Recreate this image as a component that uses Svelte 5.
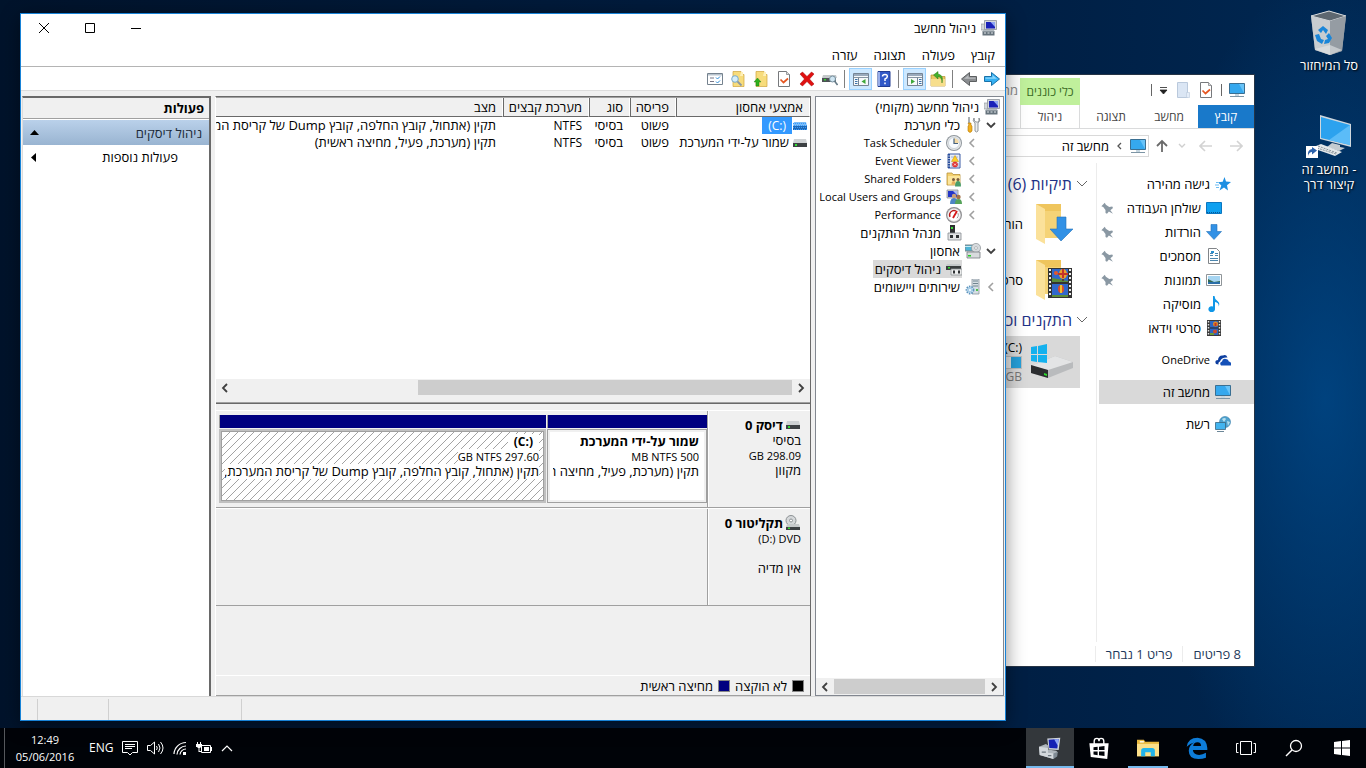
<script>
	/**
	 * Hebrew (RTL) desktop with the Computer Management console
	 * open in front of a file explorer window
	 */

	const menus = ['קובץ', 'פעולה', 'תצוגה', 'עזרה'];

	const tools = [
		{ icon: 'arrow-right', label: 'הקודם' },
		{ icon: 'arrow-left', label: 'הבא' },
		{ sep: true },
		{ icon: 'folder-out', label: 'רמה אחת למעלה' },
		{ icon: 'pane-tree', label: 'הצג עץ מסוף', active: true },
		{ sep: true },
		{ icon: 'help', label: 'עזרה' },
		{ icon: 'pane-actions', label: 'הצג חלונית פעולות', active: true },
		{ sep: true },
		{ icon: 'disk-find', label: 'סרוק דיסקים' },
		{ icon: 'delete', label: 'מחק' },
		{ icon: 'doc-check', label: 'מאפיינים' },
		{ icon: 'folder-up', label: 'פתח' },
		{ icon: 'folder-find', label: 'סייר' },
		{ icon: 'list', label: 'הגדרות' }
	];

	const tree = [
		{ level: 0, icon: 'manage', text: 'ניהול מחשב (מקומי)' },
		{ level: 1, icon: 'tools', text: 'כלי מערכת', arrow: 'open' },
		{ level: 2, icon: 'clock', text: 'Task Scheduler', arrow: 'closed', latin: true },
		{ level: 2, icon: 'event', text: 'Event Viewer', arrow: 'closed', latin: true },
		{ level: 2, icon: 'shared', text: 'Shared Folders', arrow: 'closed', latin: true },
		{ level: 2, icon: 'users', text: 'Local Users and Groups', arrow: 'closed', latin: true },
		{ level: 2, icon: 'gauge', text: 'Performance', arrow: 'closed', latin: true },
		{ level: 2, icon: 'device', text: 'מנהל ההתקנים' },
		{ level: 1, icon: 'storage', text: 'אחסון', arrow: 'open' },
		{ level: 2, icon: 'diskmgmt', text: 'ניהול דיסקים' },
		{ level: 1, icon: 'services', text: 'שירותים ויישומים', arrow: 'closed' }
	];
	let selectedNode = $state(9);

	const volumes = [
		{
			name: '(C:)',
			layout: 'פשוט',
			type: 'בסיסי',
			fs: 'NTFS',
			status: 'תקין (אתחול, קובץ החלפה, קובץ Dump של קריסת המערכת, מחיצה ראשית)'
		},
		{
			name: 'שמור על-ידי המערכת',
			layout: 'פשוט',
			type: 'בסיסי',
			fs: 'NTFS',
			status: 'תקין (מערכת, פעיל, מחיצה ראשית)'
		}
	];
	let selectedVolume = $state(0);

	const places = [
		{ icon: 'desktop', text: 'שולחן העבודה', pinned: true },
		{ icon: 'download', text: 'הורדות', pinned: true },
		{ icon: 'doc', text: 'מסמכים', pinned: true },
		{ icon: 'picture', text: 'תמונות', pinned: true },
		{ icon: 'music', text: 'מוסיקה' },
		{ icon: 'video', text: 'סרטי וידאו' }
	];

	const apps = [
		{ icon: 'edge', label: 'Edge' },
		{ icon: 'explorer', label: 'סייר הקבצים', running: true },
		{ icon: 'store', label: 'חנות' },
		{ icon: 'manage-large', label: 'ניהול מחשב', running: true, active: true }
	];
</script>

{#snippet icon(name, size = 16)}
	<svg class="icon" width={size} height={size} viewBox="0 0 16 16" aria-hidden="true">
		{#if name === 'manage'}
			<path d="M3.500.5h12v9h-12z" fill="#d5d8dc" stroke="#8c9299" stroke-width=".8" />
			<path d="M5 2h9v6.500H5z" fill="#1a22b8" />
			<path d="M9.500 2H14v5z" fill="#8fa6f3" />
			<path d="M0 4h3.500v6H0z" fill="#d2d6d9" stroke="#8c9299" stroke-width=".6" />
			<path d="M7 9.500h6v2H7z" fill="#9aa2aa" />
			<path d="M1.500 11h12v4.500h-12z" fill="#66737c" />
			<path d="M2 10h11l.5 1.500h-12z" fill="#b4bcc2" />
			<path d="M3 12.500h2v1H3zm3.500 0h2v1h-2zm3.500 0h2v1h-2z" fill="#dfe6ea" />
		{:else if name === 'manage-large'}
			<path d="m6 1 9.500-.5-1.200 9L7 9z" fill="#cfd4da" />
			<path d="m7 2 7.300-.6-1 7L7.500 8z" fill="#1420b4" />
			<path d="m11 1.700 3.300-.3-.6 5z" fill="#8da4f4" />
			<path d="m0 7 5-2 1.500 1v3l6 1 1 1-3 5L.5 13z" fill="#aeb5bb" />
			<path d="m0 7 6.500 1v3.500l4 .5v4L.5 13z" fill="#d3d8dc" />
			<path d="M2 11h3M6.500 13.500H9" stroke="#6d777f" />
			<path d="m10.500 12 3.200-1.200-.5 3.400-2.700 1.800z" fill="#7f8a93" />
		{:else if name === 'tools'}
			<path d="M4 0v6" stroke="#8d949a" stroke-width="1.500" />
			<path d="M3 6h3v2l1 1v5q-2 3-4 0V9l1-1z" fill="#f2b020" stroke="#b57808" stroke-width=".6" />
			<path d="M9 1q-2 3 1 5v8q1.500 2 3 0V6q3-2 1-5v3l-1.200 1H11L9.500 4z" fill="#eceef0" stroke="#777d83" stroke-width=".8" />
		{:else if name === 'clock'}
			<circle cx="8" cy="8" r="8" fill="#8f969c" />
			<circle cx="8" cy="8" r="7" fill="#e6e8ea" />
			<circle cx="8" cy="8" r="5.500" fill="#f8fbff" stroke="#b9c2ca" stroke-width=".6" />
			<path d="M8 8V3a5 5 0 0 1 4.800 5z" fill="#f3d9a5" />
			<path d="M8 3.500V8.500h4" fill="none" stroke="#45617f" stroke-width="1.200" />
		{:else if name === 'event'}
			<path d="M2 1h12v14H2z" fill="#e9eef7" stroke="#3d5da5" />
			<path d="M3 1v14" stroke="#274c9c" stroke-width="2" />
			<path d="M1 3h3M1 5.500h3M1 8h3M1 10.500h3M1 13h3" stroke="#aab8d4" />
			<path d="M5 4h7M5 11h8M5 13h8" stroke="#8ba6d0" stroke-width=".8" />
			<path d="m9 2.500 3.500 6h-7z" fill="#ffcf24" stroke="#c28d00" stroke-width=".5" />
			<circle cx="9" cy="11.500" r="2.800" fill="#df2f2f" />
			<path d="m8 10.500 2 2m0-2-2 2" stroke="#fff" stroke-width=".8" />
		{:else if name === 'shared'}
			<path d="M1 2h5l1 1.500h7V14H1z" fill="#f4d06e" stroke="#b8923a" stroke-width=".8" />
			<path d="M2 5h12v8.500H2z" fill="#fbe59c" />
			<circle cx="7.500" cy="8.500" r="1.500" fill="#7b5a3b" />
			<circle cx="12" cy="8.500" r="1.500" fill="#7b5a3b" />
			<path d="M5.500 13.500q0-3.500 2-3.500t2 3.500z" fill="#e8b060" />
			<path d="M9 15.500q0-5.500 3-5.500t3 5.500z" fill="#4a9e6b" />
		{:else if name === 'users'}
			<path d="M1 1h11v8H1z" fill="#cfd4da" stroke="#7c838b" stroke-width=".7" />
			<path d="M2 2h9v6H2z" fill="#2336c8" />
			<path d="M7 2h4v4z" fill="#a9b9f8" />
			<circle cx="8" cy="7" r="2.200" fill="#c9a078" />
			<circle cx="12.500" cy="8" r="2.200" fill="#a3714a" />
			<path d="M4 15q0-6 4-6t4 6z" fill="#4d84c4" />
			<path d="M9 15q0-5 3.500-5t3.500 5z" fill="#56a35a" />
		{:else if name === 'gauge'}
			<circle cx="8" cy="8" r="8" fill="#8f8f92" />
			<circle cx="8" cy="8" r="6.800" fill="#e3e3e4" />
			<circle cx="8" cy="8" r="5.800" fill="#fff" />
			<path d="M4 10a4.500 4.500 0 0 1 6-6" fill="none" stroke="#b81818" stroke-width="1.300" />
			<path d="m7 11 4-7" stroke="#d61818" stroke-width="1.800" />
			<path d="M12 6.500q1 3-1.500 5" fill="none" stroke="#444" stroke-dasharray="1 1" />
		{:else if name === 'device'}
			<path d="M4 0h5v9H4z" fill="#2d2f31" />
			<path d="M5 2h2v2H5z" fill="#3bdc3b" />
			<path d="M2 8h13v7H2z" fill="#e3e5e6" stroke="#878c90" stroke-width=".8" />
			<path d="M4 10h3v3H4zm6 0h3v3h-3z" fill="#2e3133" />
		{:else if name === 'storage'}
			<path d="M0 2h9v6H0z" fill="#4db4d6" stroke="#7e8589" />
			<path d="M0 3h9v1H0z" fill="#c8ebf5" />
			<circle cx="11" cy="5" r="4.600" fill="#d6dadd" stroke="#8d9296" stroke-width=".7" />
			<circle cx="11" cy="5" r="1.400" fill="#fff" stroke="#8d9296" stroke-width=".6" />
			<path d="M2 9h13v6H2z" fill="#d8dbdd" stroke="#777c80" stroke-width=".8" />
			<path d="M3 12h3v1.500H3z" fill="#24d024" />
		{:else if name === 'diskmgmt'}
			<path d="M1 3h13l1 2H0z" fill="#c5c8ca" />
			<path d="M0 5h15v4H0z" fill="#3a3d3f" />
			<path d="M2 6h2v1.500H2z" fill="#2fe02f" />
			<path d="M5 8h11v6H5z" fill="#eceded" stroke="#8a8f93" stroke-width=".8" />
			<path d="M7 9.500h2v3H7zm5 0h2v3h-2z" fill="#2e3133" />
		{:else if name === 'services'}
			<path d="M7 0h7v15H7z" fill="#d7dfe4" stroke="#8a969e" stroke-width=".8" />
			<path d="M8 2h5M8 4.500h5M8 7h5" stroke="#708590" />
			<path d="M11 10h2v2h-2z" fill="#4ec04e" />
			<circle cx="5" cy="11" r="3.500" fill="#cfe4f3" stroke="#5e95bd" stroke-width="1.800" stroke-dasharray="1.500 1" />
			<circle cx="5" cy="11" r="2.500" fill="#a8cde8" />
			<circle cx="5" cy="11" r="1" fill="#fff" />
		{:else if name === 'arrow-right' || name === 'arrow-left'}
			{#if name === 'arrow-right'}
				<path d="M.5 5.500h7v-4L15.500 8l-8 6.500v-4h-7z" fill="#35b0f2" stroke="#1971a8" />
				<path d="M1.500 6.500h7V4l4.500 3.800H1.500z" fill="#8dd6fb" />
			{:else}
				<path d="M15.500 5.500h-7v-4L.5 8l8 6.500v-4h7z" fill="#8a8d90" stroke="#5c5f61" />
				<path d="M14.500 6.500h-7V4L3 7.800h11.500z" fill="#b9bcbe" />
			{/if}
		{:else if name === 'folder-out'}
			<path d="M1 4h5l1.500 1.500H15V15H1z" fill="#e9c766" stroke="#b78f2c" stroke-width=".7" />
			<path d="M1 8h14v7H1z" fill="#f7de8c" />
			<path d="M12 12Q12 6 8 5.500V8L3.500 4 8 .5V3q6 1 4 9z" fill="#43b02c" stroke="#2a7c18" stroke-width=".5" />
		{:else if name === 'pane-tree' || name === 'pane-actions'}
			<path d="M.5 2.500h15v12H.5z" fill="#f6f8fa" stroke="#768494" />
			<path d="M1 3h14v2H1z" fill="#9aaabc" />
			<path d="M1 6.500h14" stroke="#8795a3" />
			{#if name === 'pane-tree'}
				<path d="M10.500 6.500v8" stroke="#768494" />
				<path d="M12 8.500h2.500M12 10.500h2.500M12 12.500h2.500" stroke="#3b71a8" />
				<path d="m4 8 4 2.500L4 13z" fill="#3ea83a" />
			{:else}
				<path d="M5.500 6.500v8" stroke="#768494" />
				<path d="M2 8.500h2.500M2 10.500h2.500M2 12.500h2.500" stroke="#3b71a8" />
				<path d="m12.500 8-4 2.500 4 2.500z" fill="#3ea83a" />
			{/if}
		{:else if name === 'help'}
			<path d="M2 .5h12v15H2z" fill="#3259c8" stroke="#223c92" />
			<path d="M2 1h2v14H2z" fill="#98aeea" />
			<path d="M6.500 5.500Q6.500 3.500 9 3.500t2.300 2Q11.300 7 9 8v2M9 11.500v1.800" fill="none" stroke="#fff" stroke-width="1.500" />
		{:else if name === 'disk-find'}
			<path d="M1 4h13l1 3H0z" fill="#c4c8ca" />
			<path d="M0 7h14v4H0z" fill="#4c5154" />
			<path d="M2 8h2v1.500H2z" fill="#32d332" />
			<circle cx="10.500" cy="8" r="3" fill="#cfe5f2" stroke="#78919f" />
			<path d="m12.500 10 3 4" stroke="#687c88" stroke-width="1.600" />
		{:else if name === 'delete'}
			<path d="m1 3 2.500-2L8 5.500 12.500 1 15 3l-4.500 5 4.500 5-2.500 2L8 10.500 3.500 15 1 13l4.500-5z" fill="#e01010" stroke="#a00000" stroke-width=".5" />
		{:else if name === 'doc-check'}
			<path d="M2.500.5h8l3 3v12h-11z" fill="#fff" stroke="#77797c" />
			<path d="M10.500.5v3h3" fill="#ddd" stroke="#77797c" stroke-width=".7" />
			<path d="m4.500 8.500 3 3 4.500-4" fill="none" stroke="#e65621" stroke-width="1.700" />
		{:else if name === 'folder-up' || name === 'folder-find'}
			<path d="M3 .5h8l1 3h2v12H3z" fill="#f7dc7c" stroke="#cfa43c" stroke-width=".7" />
			<path d="M11 1h2v4h-3z" fill="#fff0b8" />
			{#if name === 'folder-up'}
				<path d="M4.500 7 8 11H6v4H3v-4H1z" fill="#2fb01c" stroke="#197410" stroke-width=".4" />
			{:else}
				<circle cx="5" cy="8" r="3.300" fill="#d4edfb" stroke="#79aaca" />
				<path d="m7.500 10.500 4 4" stroke="#8b98a3" stroke-width="1.800" />
			{/if}
		{:else if name === 'list'}
			<path d="M.5 2.500h15v11H.5z" fill="#fff" stroke="#75828e" />
			<path d="M1 3h14v1.500H1z" fill="#b8c3cd" />
			<path d="M3 7h4M3 10.500h4" stroke="#778" />
			<path d="m9 6.500 1.500 1.500L13 5.500M9 10.500l1.500 1.500L13 9.500" fill="none" stroke="#2789d8" />
		{:else if name === 'disk'}
			<path d="M2 4h12l1 4H1z" fill="#cfd2d4" />
			<path d="M1 8h14v4H1z" fill="#3d4144" />
			<path d="M3 9h2v2H3z" fill="#32e032" />
		{:else if name === 'disk-selected'}
			<path d="M2 4h12l1 4H1z" fill="#7cbcf6" />
			<path d="M1 8h14v4H1z" fill="#1f68b4" />
			<path d="M1 5.500h14M2 7.500h14M1 9.500h14M2 11.500h13" stroke="#3399ff" stroke-dasharray="1 1" />
		{:else if name === 'cdrom'}
			<circle cx="6" cy="5.500" r="5" fill="#d5d8da" stroke="#8c9194" />
			<circle cx="6" cy="5.500" r="1.500" fill="#fff" stroke="#8c9194" />
			<path d="M2 9h12l1 3H1z" fill="#c6c9cb" />
			<path d="M1 12h14v3H1z" fill="#3d4144" />
			<path d="M3 12.500h2V14H3z" fill="#32e032" />
		{:else if name === 'pc'}
			<path d="M.5 1.500h15v10H.5z" fill="#35a8ee" stroke="#3a6f92" />
			<path d="M10 2h5v9z" fill="#68c3f8" />
			<path d="M1 14.500h14" stroke="#7d95a5" />
			<path d="M6 12h4v2H6z" fill="#c5d6e0" />
		{:else if name === 'blank-folder'}
			<path d="M2.500.5h10v15h-10z" fill="#dbe6f4" stroke="#bac9dc" />
			<path d="M11.500 10.500h3v5h-3z" fill="#e4edf8" stroke="#bac9dc" stroke-width=".6" />
		{:else if name === 'star'}
			<path d="m9.500 1 1.500 4.500 5 .5-4 3.200 1 5.300-4-3-4.500 3 1.800-5L3 6.200l4.700-.4z" fill="#1d8fe2" />
			<path d="M0 9h4M1 11.500h3M1 6.500h2" stroke="#6cbcf2" />
		{:else if name === 'desktop'}
			<path d="M.5 2.500h15v11H.5z" fill="#0ea0f0" stroke="#0b76c0" />
			<path d="M1 12.500h14" stroke="#075896" stroke-dasharray="1 1" />
		{:else if name === 'download'}
			<path d="M5 .5h6v7h4.500L8 15.500.5 7.500H5z" fill="#3291e5" stroke="#2372bb" stroke-width=".6" />
		{:else if name === 'doc'}
			<path d="M2.500.5h8l3 3v12h-11z" fill="#fff" stroke="#818589" />
			<path d="M4 5.500h3M4 7.500h3M9 5.500h3M9 7.500h3M4 10.500h8M4 12.500h8" stroke="#4b85ad" />
			<path d="M5 3h3v2H5z" fill="#2a8fd0" />
		{:else if name === 'picture'}
			<path d="M.5 2.500h15v11H.5z" fill="#fff" stroke="#8f9599" />
			<path d="M2 4h12v8H2z" fill="#a6d5f2" />
			<path d="M2 7q4 2 6 3l6-1v3H2z" fill="#346a50" />
			<path d="M2 10h12v2H2z" fill="#2b6ea8" />
		{:else if name === 'music'}
			<path d="M7 0h1.500q0 3 3 5t1 6q1-4-3.500-5v7a3.300 3 0 1 1-2-2.500z" fill="#0f97e8" />
		{:else if name === 'video'}
			<path d="M1 0h14v16H1z" fill="#3b3b3b" />
			<path d="M4 1h8v14H4z" fill="#2c66c4" />
			<path d="M2.500 1v14M13.500 1v14" stroke="#e6e6e6" stroke-width="1.400" stroke-dasharray="1.500 1.500" />
			<circle cx="9.500" cy="4" r="2.500" fill="#e08a22" />
			<path d="M8.500 3h2v3h-2z" fill="#c3342a" />
			<path d="M4 8h8" stroke="#222" />
			<circle cx="9" cy="11.500" r="2" fill="#cf4a2a" />
			<path d="M4 13h4v2H4z" fill="#6a9b3c" />
		{:else if name === 'onedrive'}
			<path d="M1 12Q-1 8 3 8 3.500 3 8 3.500q3-1.500 4.500 2Q6.500 5 5 9.500q-2 .5-1.500 3z" fill="#0d3e9f" />
			<path d="M6 13.500q-2-3 1-4Q7.500 6 11 7q2.500 0 2.800 2.500 3 .5 2.200 4z" fill="#1450b8" />
		{:else if name === 'network'}
			<circle cx="10" cy="6" r="5.500" fill="#4ea2cf" stroke="#387ea9" stroke-width=".6" />
			<path d="M7 3q3-2 4 0l-2 3zm5 2 3 1-2 4z" fill="#b5dfee" />
			<path d="M.5 6.500h10v7H.5z" fill="#43b4ef" stroke="#39657f" stroke-width=".8" />
			<path d="M2 15.500h7" stroke="#6c8798" />
		{:else if name === 'pin'}
			<path d="M5 1 6.500 3.500 11 6.500l4-.5 1 2-3.500 3L16 15.500 10.500 12.500 8 15.500l-2-1v-4L3 6.500.5 5.500z" fill="#8a98a3" />
		{:else if name === 'edge'}
			<path d="M.5 7Q1.500.5 8.500.5 15 1 15.500 8v1.500H5q.3 3.500 4.500 3.500 2.500 0 5-1.500V15Q12 16 9 16 2 16 2 10q0-4 4-6Q3 4.500.5 7zM5.200 6.500H11Q11 4 8.400 3.800 5.500 4 5.200 6.500z" fill="#0d7cd8" />
		{:else if name === 'explorer'}
			<path d="M0 2h5l1 1.500h10V14H0z" fill="#e9b93f" />
			<path d="M0 5h16v9H0z" fill="#fce08a" />
			<path d="M2 3h3v1H2z" fill="#fff" />
			<path d="M3 14V10q0-2 2-2h6q2 0 2 2v4h-3v-3H6v3z" fill="#22b4ea" />
		{:else if name === 'store'}
			<path d="M4.500 5V3q0-2 2-2 1.500 0 1.500 2 0-2 1.500-2 2 0 2 2v2" fill="none" stroke="#fff" />
			<path d="M1 4.500h14L14 16 2 14.500z" fill="#fff" />
			<path d="M4 7.500 7 7v2.500H4zM8 7l4-.5v3H8zM4 10.500h3v2.700L4 12.800zM8 10.500h4v3.300l-4-.5z" fill="#000308" />
		{/if}
	</svg>
{/snippet}

{#snippet chevron(direction)}
	<svg class="icon" width="10" height="10" viewBox="0 0 10 10" aria-hidden="true">
		{#if direction === 'open'}
			<path d="m1 3 4 4 4-4" fill="none" stroke="#404040" stroke-width="1.800" />
		{:else if direction === 'right'}
			<path d="m3 1 4 4-4 4" fill="none" stroke="#404040" stroke-width="1.800" />
		{:else if direction === 'left'}
			<path d="M7 1 3 5l4 4" fill="none" stroke="#404040" stroke-width="1.800" />
		{:else}
			<path d="M7 1 3 5l4 4" fill="none" stroke="#a0a0a0" stroke-width="1.600" />
		{/if}
	</svg>
{/snippet}

{#snippet folder(overlay)}
	<svg class="icon" width="42" height="42" viewBox="0 0 42 42" aria-hidden="true">
		<path d="M2 1h25v34H2z" fill="#efc55d" />
		<path d="M2 1l9 5v35l-9-5z" fill="#fbe19a" />
		<path d="M11 8h16v27H11z" fill="#f5d377" />
		{#if overlay === 'download'}
			<path d="M23 14h9v12h7L27 38 16 26h7z" fill="#3291e5" stroke="#2372bb" stroke-width=".6" />
		{:else}
			<path d="M14 9h24v30H14z" fill="#333" />
			<path d="M18 10h16v13H18zM18 25h16v13H18z" fill="#3068cc" />
			<path d="M16 10v28M36 10v28" stroke="#eee" stroke-width="2" stroke-dasharray="2 2" />
			<path d="M18 19l6 1 10 2v1H18zM18 36h16v2H18z" fill="#5b8c3a" />
			<ellipse cx="29" cy="15" rx="4" ry="5" fill="#eba22b" />
			<path d="M28 10h2v9h-2zM24 14h10v2H24z" fill="#c3342a" />
			<path d="M28 20h2v2h-2z" fill="#543" />
			<ellipse cx="27" cy="30" rx="3" ry="4" fill="#dd4d2a" />
			<path d="M26 26h2v8h-2z" fill="#f2c02b" />
			<circle cx="22" cy="14" r="2" fill="#e4582c" />
		{/if}
	</svg>
{/snippet}

<div class="screen" dir="rtl">
	<main class="workspace">
		<nav class="shortcuts" aria-label="שולחן העבודה">
			<a class="shortcut" href="#bin">
				<svg width="48" height="48" viewBox="0 0 48 48" aria-hidden="true">
					<path d="M6 8 24 3l17 5-4 35-12 4-15-5z" fill="#aeb4b9" opacity=".85" />
					<path d="m6 8 18-5 17 5-16 5z" fill="#5d6770" stroke="#d7dbde" />
					<path d="m6 8 19 5v34l-15-5z" fill="#c9cdd0" />
					<path d="m25 13 16-5-4 35-12 4z" fill="#959ca3" />
					<path d="m10 41 15-4 12 5-12 5z" fill="#e4e6e7" opacity=".6" />
					<path d="m13 22 5-4 5 4-2 4-3-4-2 3zM10 27l4-1 2 5 3 1-2 4-5-3zM24 25l3 5-3 5-5 1 1-4 3-1-2-3z" fill="#1b86d8" />
				</svg>
				<span>סל המיחזור</span>
			</a>
			<a class="shortcut" href="#this-pc">
				<svg width="48" height="48" viewBox="0 0 48 48" aria-hidden="true">
					<path d="m15 3 31 9v23l-31-8z" fill="#cfd7dd" />
					<path d="m16 5 29 8v20l-29-7z" fill="#2ca2ee" />
					<path d="M45 13v20l-21-5z" fill="#5bbcf8" />
					<path d="m27 31 8 2v2l5 1-6 3-12-4z" fill="#c4cbd0" />
					<path d="m11 34 5-2 21 8-7 4-20-7z" fill="#e4e8ea" />
					<path d="m13 34 19 7M12 36l19 6" stroke="#89939a" stroke-dasharray="2 1" />
					<path d="M1 34h12v12H1z" fill="#fff" />
					<path d="M3 44q-1-6 4-7v-2l5 3.500-5 4v-2.500q-3 0-4 4z" fill="#2c62ab" />
				</svg>
				<span dir="ltr">מחשב זה -<br />קיצור דרך</span>
			</a>
		</nav>

		<section class="explorer" aria-label="מחשב זה">
			<header class="ex-title">
				<div class="quick">
					{@render icon('pc')}
					<i></i>
					<button aria-label="מאפיינים">{@render icon('doc-check')}</button>
					<button aria-label="תיקיה חדשה">{@render icon('blank-folder')}</button>
					<button aria-label="התאמה אישית">
						<svg width="9" height="9" viewBox="0 0 9 9"><path d="M1 1.500h7M1 4h7L4.500 8z" fill="#222" stroke="#222" stroke-width=".8" /></svg>
					</button>
					<i></i>
				</div>
				<div class="drive-tools">כלי כוננים</div>
				<span class="ex-name">מחשב זה</span>
			</header>
			<div class="ribbon">
				<button class="file-tab">קובץ</button>
				<button>מחשב</button>
				<button>תצוגה</button>
				<button class="manage-tab">ניהול</button>
			</div>
			<div class="address-row">
				<button aria-label="הקודם"><svg width="14" height="12" viewBox="0 0 14 12"><path d="M1 6h11M8 1l5 5-5 5" fill="none" stroke="#d3d3d3" stroke-width="1.600" /></svg></button>
				<button aria-label="הבא"><svg width="14" height="12" viewBox="0 0 14 12"><path d="M13 6H2M6 1 1 6l5 5" fill="none" stroke="#d3d3d3" stroke-width="1.600" /></svg></button>
				<button class="recent" aria-label="אחרונים"><svg width="8" height="6" viewBox="0 0 8 6"><path d="m1 1 3 3 3-3" fill="none" stroke="#cfcfcf" stroke-width="1.400" /></svg></button>
				<button class="up" aria-label="למעלה"><svg width="12" height="14" viewBox="0 0 12 14"><path d="M6 13V2M1 7l5-5 5 5" fill="none" stroke="#6a6a6a" stroke-width="1.800" /></svg></button>
				<div class="address">
					{@render icon('pc')}
					<svg width="5" height="8" viewBox="0 0 5 8"><path d="M4 1 1 4l3 3" fill="none" stroke="#555" stroke-width="1.300" /></svg>
					<button>מחשב זה</button>
				</div>
			</div>
			<div class="ex-body">
				<nav class="places">
					<a class="top" href="#quick">{@render icon('star')}<span>גישה מהירה</span></a>
					{#each places as place}
						<a href="#place">
							{@render icon(place.icon)}<span>{place.text}</span>
							{#if place.pinned}<em>{@render icon('pin', 12)}</em>{/if}
						</a>
					{/each}
					<a class="top spaced" href="#onedrive">{@render icon('onedrive')}<span class="latin">OneDrive</span></a>
					<a class="top spaced current" href="#pc">{@render icon('pc')}<span>מחשב זה</span></a>
					<a class="top spaced" href="#network">{@render icon('network')}<span>רשת</span></a>
				</nav>
				<div class="files">
					<h2>
						<svg width="12" height="8" viewBox="0 0 12 8"><path d="m1 1 5 5 5-5" fill="none" stroke="#666" /></svg>
						תיקיות (6)
					</h2>
					<a class="file" href="#downloads">{@render folder('download')}<span>הורדות</span></a>
					<a class="file" href="#videos">{@render folder('video')}<span>סרטי וידאו</span></a>
					<h2>
						<svg width="12" height="8" viewBox="0 0 12 8"><path d="m1 1 5 5 5-5" fill="none" stroke="#666" /></svg>
						התקנים וכוננים (2)
					</h2>
					<a class="file drive" href="#c">
						<svg width="44" height="36" viewBox="0 0 44 36" aria-hidden="true">
							<path d="m1 22 24-10 18 6v6L18 34 1 29z" fill="#b9bbbd" />
							<path d="m1 22 24-10 18 6-25 8z" fill="#e3e4e5" />
							<path d="m1 21 17 5v8L1 29z" fill="#2b2d2f" />
							<path d="m14 29 3 1v2l-3-1z" fill="#2bdc2b" />
							<path d="m1 3 6-1v8H1zM8 2l9-2v10H8zM1 11h6v7l-6-1zM8 11h9v8l-9-1z" fill="#14b1ee" />
						</svg>
						<div class="drive-info">
							<span dir="ltr">(C:)</span>
							<div class="meter"><b></b></div>
							<small dir="ltr">263 GB</small>
						</div>
					</a>
				</div>
			</div>
			<footer class="ex-status">
				<span>8 פריטים</span>
				<span>פריט 1 נבחר</span>
			</footer>
		</section>

		<section class="console" aria-label="ניהול מחשב">
			<header class="title-bar">
				{@render icon('manage')}
				<h1>ניהול מחשב</h1>
				<button aria-label="מזער"><svg width="12" height="12" viewBox="0 0 12 12"><path d="M1 6.500h10" stroke="#000" /></svg></button>
				<button aria-label="הגדל"><svg width="12" height="12" viewBox="0 0 12 12"><path d="M1.500 1.500h9v9h-9z" fill="none" stroke="#000" /></svg></button>
				<button aria-label="סגור"><svg width="12" height="12" viewBox="0 0 12 12"><path d="m1 1 10 10M11 1 1 11" stroke="#000" /></svg></button>
			</header>
			<nav class="menu-bar">
				{#each menus as menu}
					<button>{menu}</button>
				{/each}
			</nav>
			<div class="tool-bar">
				{#each tools as tool}
					{#if tool.sep}
						<i></i>
					{:else}
						<button class:active={tool.active} aria-label={tool.label}>{@render icon(tool.icon)}</button>
					{/if}
				{/each}
			</div>

			<div class="panes">
				<div class="tree-pane">
					<ul class="tree">
						{#each tree as node, i}
							<li class="level-{node.level}">
								{#if node.level > 0}
									<span class="twisty">{#if node.arrow}{@render chevron(node.arrow)}{/if}</span>
								{/if}
								<button class:selected={selectedNode === i} onclick={() => (selectedNode = i)}>
									{@render icon(node.icon)}<span class:latin={node.latin}>{node.text}</span>
								</button>
							</li>
						{/each}
					</ul>
					<div class="scrollbar">
						<button aria-label="גלול ימינה">{@render chevron('right')}</button>
						<div class="thumb"></div>
						<button aria-label="גלול שמאלה">{@render chevron('left')}</button>
					</div>
				</div>

				<div class="disk-pane">
					<div class="volumes">
						<div class="table-wrap">
							<table>
								<thead>
									<tr>
										<th class="c-name">אמצעי אחסון</th>
										<th class="c-layout">פריסה</th>
										<th class="c-type">סוג</th>
										<th class="c-fs">מערכת קבצים</th>
										<th>מצב</th>
									</tr>
								</thead>
								<tbody>
									{#each volumes as volume, i}
										<tr onclick={() => (selectedVolume = i)}>
											<td class="name">
												{@render icon(selectedVolume === i ? 'disk-selected' : 'disk')}
												<span class:selected={selectedVolume === i}><bdi>{volume.name}</bdi></span>
											</td>
											<td>{volume.layout}</td>
											<td>{volume.type}</td>
											<td class="fs">{volume.fs}</td>
											<td>{volume.status}</td>
										</tr>
									{/each}
								</tbody>
							</table>
						</div>
						<div class="scrollbar wide">
							<button aria-label="גלול ימינה">{@render chevron('right')}</button>
							<div class="thumb"></div>
							<button aria-label="גלול שמאלה">{@render chevron('left')}</button>
						</div>
						<div class="splitter"></div>
					</div>

					<div class="disks">
						<div class="disk">
							<div class="disk-label">
								<strong>{@render icon('disk')}דיסק 0</strong>
								<span>בסיסי</span>
								<span class="latin">298.09 GB</span>
								<span>מקוון</span>
							</div>
							<div class="partitions">
								<div class="partition reserved">
									<div class="strip"></div>
									<div class="box">
										<strong>שמור על-ידי המערכת</strong>
										<span class="latin">500 MB NTFS</span>
										<span>תקין (מערכת, פעיל, מחיצה ראשית)</span>
									</div>
								</div>
								<div class="partition system">
									<div class="strip"></div>
									<div class="box">
										<svg class="hatch" width="100%" height="100%" aria-hidden="true">
											<defs>
												<pattern id="hatch" width="8" height="8" patternUnits="userSpaceOnUse">
													<path d="M-1 9 9-1" stroke="#8c8c8c" stroke-width=".8" />
												</pattern>
											</defs>
											<rect width="100%" height="100%" fill="url(#hatch)" />
										</svg>
										<strong class="latin"><bdi dir="ltr">(C:)</bdi></strong>
										<span class="latin">297.60 GB NTFS</span>
										<span>תקין (אתחול, קובץ החלפה, קובץ Dump של קריסת המערכת, מחיצה ראשית)</span>
									</div>
								</div>
							</div>
						</div>
						<div class="disk">
							<div class="disk-label">
								<strong>{@render icon('cdrom')}תקליטור 0</strong>
								<span class="latin"><bdi dir="ltr">(D:) DVD</bdi></span>
								<span>&nbsp;</span>
								<span>אין מדיה</span>
							</div>
							<div class="partitions"></div>
						</div>
						<div class="legend">
							<span class="swatch unallocated"></span>לא הוקצה
							<span class="swatch primary"></span>מחיצה ראשית
						</div>
					</div>
				</div>

				<aside class="actions">
					<h2>פעולות</h2>
					<button class="group">
						<span>ניהול דיסקים</span>
						<svg width="9" height="5" viewBox="0 0 9 5"><path d="M0 5 4.500 0 9 5z" /></svg>
					</button>
					<button class="more">
						<span>פעולות נוספות</span>
						<svg width="5" height="9" viewBox="0 0 5 9"><path d="M5 0 0 4.500 5 9z" /></svg>
					</button>
				</aside>
			</div>

			<footer class="status-bar"><span></span><span></span><span></span></footer>
		</section>
	</main>

	<footer class="taskbar">
		<button aria-label="התחל"><svg width="16" height="16" viewBox="0 0 16 16"><path d="m0 2 7-1v6.500H0zM8 1l8-1v7.500H8zM0 8.500h7V15l-7-1zM8 8.500h8V16l-8-1z" fill="#fff" /></svg></button>
		<button aria-label="חיפוש"><svg width="18" height="18" viewBox="0 0 18 18"><circle cx="11" cy="7" r="5.500" fill="none" stroke="#fff" stroke-width="1.300" /><path d="m7 11-6 6" stroke="#fff" stroke-width="1.500" /></svg></button>
		<button aria-label="תצוגת משימות"><svg width="20" height="16" viewBox="0 0 20 16"><path d="M4.500 1.500h11v13h-11zM2.500 3.500h-2v9h2M17.500 3.500h2v9h-2" fill="none" stroke="#fff" /></svg></button>
		{#each apps as app}
			<button class="app" class:running={app.running} class:active={app.active} aria-label={app.label}>{@render icon(app.icon, 22)}</button>
		{/each}
		<div class="tray">
			<button aria-label="הצג סמלים מוסתרים"><svg width="12" height="8" viewBox="0 0 12 8"><path d="m1 7 5-5 5 5" fill="none" stroke="#fff" stroke-width="1.200" /></svg></button>
			<button aria-label="סוללה"><svg width="16" height="12" viewBox="0 0 16 12"><path d="M5.500 3.500h9v7h-9z" fill="none" stroke="#fff" /><path d="M8 5h5v4H8zM15 5h1v4h-1zM0 2h6v3H5L4 6H2L1 5H0zM1 0h1v2H1zM4 0h1v2H4zM2.500 6h1v3h2v1h-3z" fill="#fff" /></svg></button>
			<button aria-label="רשת"><svg width="14" height="14" viewBox="0 0 14 14"><path d="M1 13A12 12 0 0 1 13 1.500M4 13.500a9 9 0 0 1 9-8.500M7 13.500a6 6 0 0 1 6-5.500" fill="none" stroke="#fff" stroke-width="1.200" /><path d="M10 11h3v3h-3z" fill="#fff" /></svg></button>
			<button aria-label="עוצמת קול"><svg width="17" height="14" viewBox="0 0 17 14"><path d="M.5 4.500h3l4-3.500v12l-4-3.500h-3z" fill="none" stroke="#fff" /><path d="M9.500 5q1.500 2 0 4M11.500 3q3 4 0 8M13.500 1q5 6 0 12" fill="none" stroke="#fff" /></svg></button>
			<button aria-label="הודעות"><svg width="16" height="16" viewBox="0 0 16 16"><path d="M.5 1.500h15v11h-5L8 15l-2.500-2.500h-5z" fill="none" stroke="#fff" /><path d="M3 4.500h10M3 6.500h10M3 8.500h7" stroke="#fff" /></svg></button>
			<button class="lang">ENG</button>
			<button class="clock"><span>12:49</span><span>05/06/2016</span></button>
			<i></i>
		</div>
	</footer>
</div>

<style>
	:global(body) {
		background: #00132c;
	}

	.screen {
		min-height: 100vh;
		display: flex;
		flex-direction: column;
		overflow: hidden;
		font-family: 'Open Sans', 'Noto Sans', 'Liberation Sans', sans-serif;
		font-size: 13px;
		line-height: 16px;
		color: #000;
		background:
			radial-gradient(ellipse 180px 420px at 97% 52%, rgba(0, 84, 156, 0.6), transparent),
			linear-gradient(90deg, #00132b 0%, #001a3a 40%, #001f44 75%, #002853 100%);
	}

	.screen * {
		box-sizing: border-box;
	}

	button {
		margin: 0;
		padding: 0;
		border: none;
		background: none;
		font: inherit;
		color: inherit;
		text-align: right;
	}

	a {
		color: inherit;
		text-decoration: none;
	}

	h1,
	h2 {
		margin: 0;
		font-size: 13px;
		font-weight: 400;
	}

	svg {
		display: block;
		flex: none;
	}

	.latin {
		font-size: 11px;
	}

	.workspace {
		flex: 1;
		position: relative;
	}

	/* Desktop shortcuts */
	.shortcuts {
		width: 74px;
		padding-top: 8px;
		display: flex;
		flex-direction: column;
		gap: 39px;
	}

	.shortcut {
		display: flex;
		flex-direction: column;
		align-items: center;
		text-align: center;
		color: #fff;
		line-height: 15px;
		white-space: nowrap;
		text-shadow: 1px 1px 2px #000;
	}

	.shortcut svg {
		margin-bottom: 2px;
	}

	/* Explorer window */
	.explorer {
		position: absolute;
		top: 74px;
		right: 111px;
		bottom: 61px;
		width: 480px;
		display: flex;
		flex-direction: column;
		background: #fff;
		border: 1px solid #263445;
	}

	.ex-title {
		height: 30px;
		display: flex;
		align-items: stretch;
	}

	.quick {
		display: flex;
		align-items: center;
		gap: 7px;
		padding: 0 9px;
		width: 174px;
	}

	.quick i {
		width: 1px;
		height: 12px;
		background: #666;
	}

	.drive-tools {
		width: 60px;
		margin-top: 3px;
		background: #c0f09c;
		color: #3b6b25;
		font-size: 12px;
		text-align: center;
		line-height: 27px;
		white-space: nowrap;
	}

	.ex-name {
		padding: 7px 2px;
		color: #888;
	}

	.ribbon {
		display: flex;
		border-bottom: 1px solid #dadbdc;
		font-size: 12px;
		color: #444;
	}

	.ribbon button {
		width: 58px;
		height: 23px;
		text-align: center;
	}

	.ribbon .file-tab {
		width: 56px;
		background: #1979ca;
		color: #fff;
	}

	.ribbon .manage-tab {
		width: 60px;
		margin-right: 2px;
		border: solid #dadbdc;
		border-width: 0 1px;
	}

	.address-row {
		height: 34px;
		padding-right: 3px;
		display: flex;
		align-items: center;
	}

	.address-row > button {
		width: 30px;
		display: flex;
		justify-content: center;
	}

	.address-row > .recent {
		width: 18px;
	}

	.address-row > .up {
		width: 22px;
	}

	.address-row .address {
		flex: 1;
		height: 22px;
		margin-right: 2px;
		padding: 0 2px;
		display: flex;
		align-items: center;
		gap: 8px;
		border: 1px solid #d9d9d9;
	}

	.ex-body {
		flex: 1;
		display: flex;
	}

	.places {
		width: 158px;
		padding: 9px 0 0 2px;
		border-left: 1px solid #ececec;
	}

	.places a {
		height: 24px;
		padding-right: 32px;
		display: flex;
		align-items: center;
		gap: 5px;
	}

	.places .top {
		padding-right: 23px;
	}

	.places .spaced {
		margin-top: 8px;
	}

	.places .current {
		background: #d9d9d9;
	}

	.places em {
		margin-right: auto;
		padding-left: 2px;
	}

	.files {
		flex: 1;
		padding: 9px 16px 0 0;
	}

	.files h2 {
		height: 24px;
		margin-right: -8px;
		display: flex;
		align-items: center;
		gap: 4px;
		font-size: 16px;
		color: #1e3287;
		white-space: nowrap;
	}

	.file {
		height: 56px;
		padding-right: 4px;
		display: flex;
		align-items: center;
		gap: 11px;
	}

	.files h2 + .drive {
		height: 52px;
		margin-top: 4px;
		padding-right: 6px;
		gap: 8px;
		background: #d9d9d9;
	}

	.drive-info {
		width: 200px;
		display: flex;
		flex-direction: column;
		align-items: flex-start;
		font-size: 12px;
	}

	.meter {
		width: 100%;
		height: 13px;
		background: #e6e6e6;
		border: 1px solid #bcbcbc;
	}

	.meter b {
		display: block;
		width: 5%;
		height: 100%;
		background: #26a0da;
	}

	.drive-info small {
		font-size: 12px;
		color: #777;
	}

	.ex-status {
		height: 24px;
		padding-right: 3px;
		display: flex;
		align-items: center;
		color: #1e395b;
	}

	.ex-status span {
		padding: 0 10px;
		border-left: 1px solid #ececec;
	}

	/* Computer Management window */
	.console {
		position: absolute;
		top: 13px;
		right: 360px;
		bottom: 7px;
		left: 20px;
		display: flex;
		flex-direction: column;
		background: #f0f0f0;
		border: 1px solid #1883d7;
		box-shadow: 0 4px 18px rgba(0, 0, 0, 0.45);
	}

	.title-bar {
		height: 28px;
		padding-right: 8px;
		display: flex;
		align-items: center;
		background: #fff;
	}

	.title-bar h1 {
		flex: 1;
		padding-right: 5px;
	}

	.title-bar button {
		width: 46px;
		height: 28px;
		display: flex;
		align-items: center;
		justify-content: center;
	}

	.menu-bar {
		height: 24px;
		padding: 2px 2px 0 0;
		display: flex;
		background: #fff;
	}

	.menu-bar button {
		padding: 0 8px;
	}

	.tool-bar {
		height: 25px;
		padding-right: 2px;
		display: flex;
		align-items: center;
		background: #fff;
		border-top: 1px solid #b4b4b4;
		border-bottom: 1px solid #dcdcdc;
	}

	.tool-bar button {
		width: 23px;
		height: 22px;
		display: flex;
		align-items: center;
		justify-content: center;
	}

	.tool-bar button.active {
		background: #cde8ff;
		border: 1px solid #99d1ff;
	}

	.tool-bar i {
		width: 1px;
		height: 18px;
		margin: 0 4px 0 3px;
		background: #808080;
	}

	.panes {
		flex: 1;
		padding: 5px 1px 0;
		display: flex;
		gap: 4px;
		min-height: 0;
	}

	.tree-pane {
		width: 189px;
		display: flex;
		flex-direction: column;
		background: #fff;
		border: 1px solid #828790;
	}

	.tree {
		flex: 1;
		margin: 0;
		padding: 1px 3px 0 0;
		list-style: none;
	}

	.tree li {
		height: 18px;
		display: flex;
		white-space: nowrap;
	}

	.level-2 {
		padding-right: 19px;
	}

	.twisty {
		width: 19px;
		display: flex;
		align-items: center;
		justify-content: center;
	}

	.tree button {
		display: flex;
		align-items: center;
		gap: 5px;
		padding-left: 2px;
	}

	.tree button.selected {
		background: #d9d9d9;
	}

	.scrollbar {
		height: 17px;
		display: flex;
		padding: 1px 0;
		background: #f0f0f0;
	}

	.scrollbar button {
		width: 18px;
		display: flex;
		align-items: center;
		justify-content: center;
	}

	.thumb {
		flex: 1;
		background: #cdcdcd;
	}

	.wide .thumb {
		margin-left: 31%;
	}

	.disk-pane {
		flex: 1;
		min-width: 0;
		display: grid;
		grid-template-rows: 307fr 292fr;
		border: solid #696969;
		border-width: 1px 1px 0 0;
		border-left: 1px solid #fff;
	}

	.volumes {
		min-height: 0;
		display: flex;
		flex-direction: column;
		background: #fff;
		border-top: 1px solid #a0a0a0;
		border-bottom: 1px solid #696969;
	}

	.table-wrap {
		flex: 1;
		overflow: hidden;
	}

	table {
		width: 100%;
		table-layout: fixed;
		border-collapse: separate;
		border-spacing: 0;
		white-space: nowrap;
	}

	th,
	td {
		padding: 0 7px;
		font-weight: 400;
		text-align: right;
		overflow: hidden;
	}

	th {
		height: 19px;
		padding: 0 6px 0 3px;
		background: #f0f0f0;
		border-left: 1px solid #696969;
		border-right: 1px solid #fff;
		border-bottom: 1px solid #696969;
	}

	th:last-child {
		border-left: none;
	}

	td {
		height: 17px;
		line-height: 17px;
	}

	td:last-child {
		padding-left: 0;
	}

	.fs {
		font-size: 12px;
	}

	.c-name {
		width: 134px;
	}

	.c-layout {
		width: 46px;
	}

	.c-type {
		width: 41px;
	}

	.c-fs {
		width: 86px;
	}

	td.name {
		padding: 0 2px 0 0;
		display: flex;
		align-items: center;
	}

	td.name > span {
		padding: 0 3px 0 0;
	}

	td.name > .selected {
		padding: 0 6px;
		font-size: 12px;
		background: #3399ff;
		color: #fff;
	}

	.splitter {
		height: 7px;
		background: #f0f0f0;
		border-bottom: 1px solid #a0a0a0;
	}

	.disks {
		display: flex;
		flex-direction: column;
		padding-top: 6px;
		overflow: hidden;
	}

	.disk {
		height: 98px;
		display: flex;
		border-top: 1px solid #fff;
		border-bottom: 1px solid #a0a0a0;
	}

	.disk-label {
		width: 102px;
		padding: 6px 9px 0 0;
		display: flex;
		flex-direction: column;
		border-left: 1px solid #fff;
		line-height: 15px;
	}

	.disk-label strong {
		display: flex;
		align-items: center;
		gap: 2px;
	}

	.partitions {
		flex: 1;
		min-width: 0;
		padding: 4px 0 4px 3px;
		display: flex;
		gap: 1px;
		border-right: 1px solid #a0a0a0;
	}

	.partition {
		display: flex;
		flex-direction: column;
		min-width: 0;
	}

	.reserved {
		flex: 160;
	}

	.system {
		flex: 327;
	}

	.strip {
		height: 13px;
		margin-bottom: 1px;
		background: #000080;
		border-left: 1px solid #a0a0a0;
	}

	.box {
		flex: 1;
		position: relative;
		display: flex;
		flex-direction: column;
		align-items: flex-start;
		padding: 2px 5px 2px 3px;
		overflow: hidden;
		background: #fff;
		border: 3px solid #f0f0f0;
		outline: 1px solid #a0a0a0;
		outline-offset: -1px;
		line-height: 15px;
		white-space: nowrap;
	}

	.system .box {
		padding: 2px 4px 2px 3px;
		border-color: #c0c0c0;
		outline-offset: -3px;
	}

	.box strong,
	.box span {
		position: relative;
		max-width: 100%;
		overflow: hidden;
		background: #fff;
	}

	.system strong {
		padding: 0 6px;
		font-size: 12px;
	}

	.hatch {
		position: absolute;
		inset: 0;
	}

	.legend {
		height: 21px;
		margin-top: auto;
		padding-right: 6px;
		display: flex;
		align-items: center;
		gap: 5px;
		border-top: 1px solid #fff;
		border-bottom: 1px solid #a0a0a0;
	}

	.swatch {
		width: 12px;
		height: 12px;
		border: 1px solid #888;
	}

	.unallocated {
		background: #000;
	}

	.primary {
		background: #000080;
	}

	.actions {
		width: 189px;
		background: #fff;
		border: solid #696969;
		border-width: 2px 2px 0 0;
		border-left: 1px solid #dcdcdc;
	}

	.actions h2 {
		height: 21px;
		padding-right: 5px;
		line-height: 20px;
		font-weight: 700;
		background: #f0f0f0;
		border-bottom: 1px solid #a0a0a0;
	}

	.actions button {
		width: 100%;
		height: 24px;
		padding: 0 31px 0 8px;
		display: flex;
		align-items: center;
		justify-content: space-between;
	}

	.actions .group {
		height: 25px;
		margin-top: 1px;
		padding: 0 7px;
		background: linear-gradient(#bad1ea, #99b4d1);
		color: #1c2a3a;
	}

	.status-bar {
		height: 24px;
		padding-top: 2px;
		display: flex;
		justify-content: flex-end;
		border-top: 1px solid #d8d8d8;
	}

	.status-bar span {
		width: 133px;
		border-right: 1px solid #d0d0d0;
	}

	.status-bar span:nth-child(2) {
		width: 71px;
	}

	.status-bar span:last-child {
		width: 17px;
	}

	/* Taskbar */
	.taskbar {
		height: 40px;
		display: flex;
		background: #000308;
		color: #fff;
	}

	.taskbar > button {
		width: 48px;
		display: flex;
		align-items: center;
		justify-content: center;
	}

	.taskbar > .app {
		margin-right: 1px;
		border: solid transparent;
		border-width: 2px 0;
	}

	.taskbar > .running {
		background: linear-gradient(#76b9ed, #76b9ed) bottom / 40px 2px no-repeat border-box;
	}

	.taskbar > .active {
		background: #33373b;
		border-bottom-color: #76b9ed;
	}

	.tray {
		margin-right: auto;
		padding-left: 4px;
		display: flex;
		align-items: center;
		gap: 9px;
	}

	.tray .clock {
		width: 62px;
		display: flex;
		flex-direction: column;
		align-items: center;
		line-height: 17px;
		font-size: 11px;
	}

	.tray .lang {
		margin: 0 0 0 4px;
		font-size: 12px;
	}

	.tray i {
		align-self: stretch;
		width: 1px;
		background: #55585c;
	}
</style>
